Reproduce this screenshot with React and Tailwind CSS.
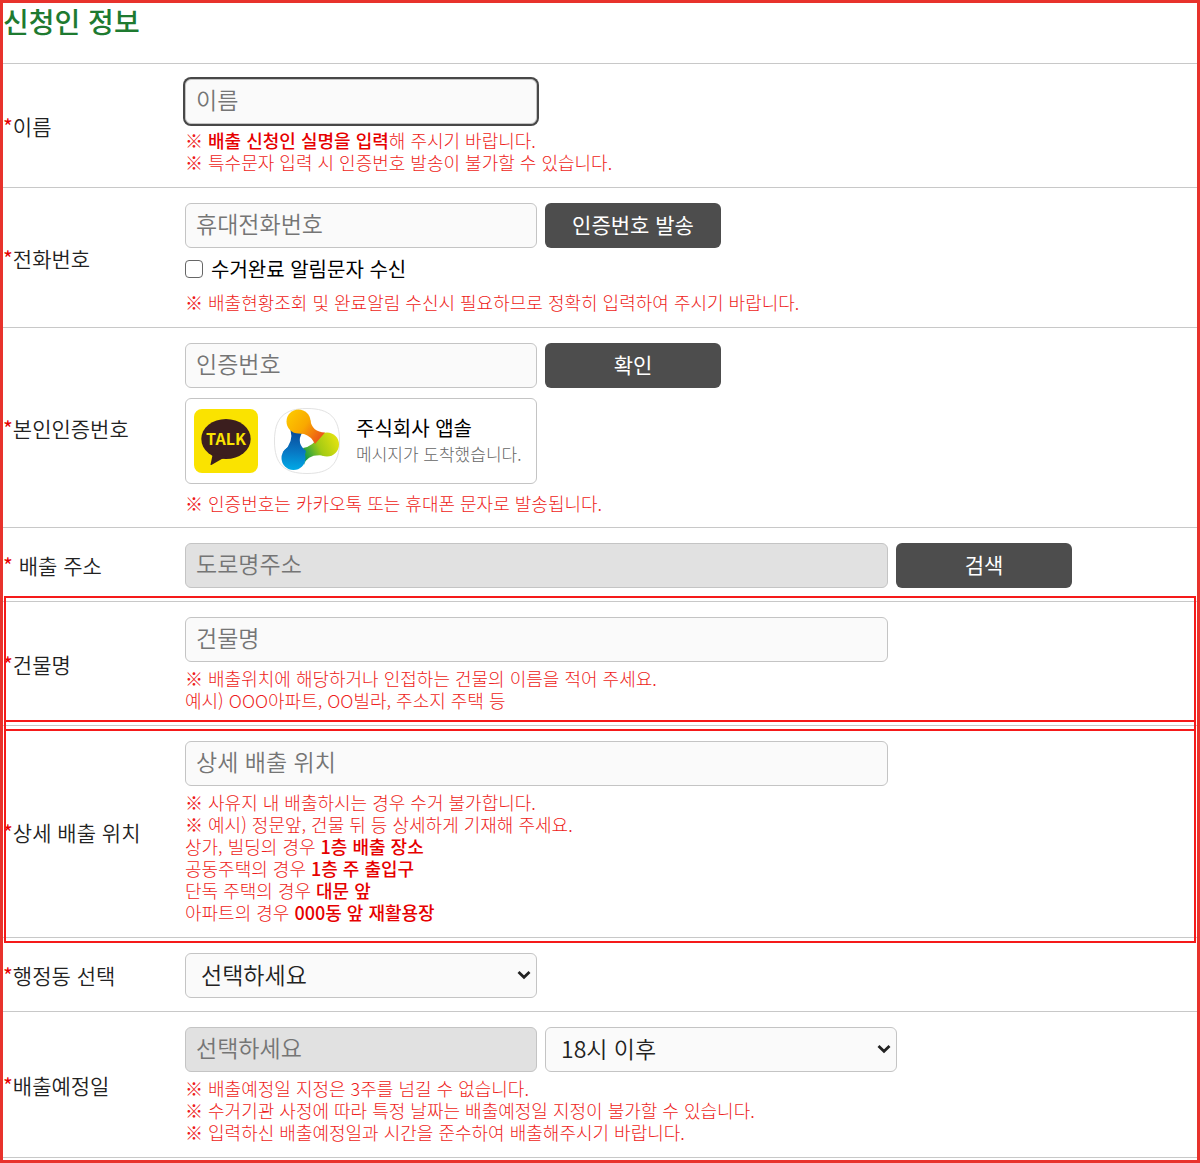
const INPUT =
  'h-[45px] w-full rounded-md border border-[#c4c4c4] px-2.5 pb-1.5 text-[23px] font-[350] leading-8 text-[#222] placeholder:text-[#757575] placeholder:opacity-100 focus:outline-none';
const SHORT = 'max-w-[352px]';
const LONG = 'max-w-[703px]';

function Row({ label, htmlFor, gap, framed, children }) {
  return (
    <div className="relative grid grid-cols-[182px_minmax(0,1fr)] items-center border-b border-[#c8c8c8] pt-[15px] pb-[13px]">
      <label htmlFor={htmlFor} className="pb-0.5 text-[21px] font-[350] leading-8 text-[#222]">
        <span className="font-normal text-[#e60000]">*</span>
        {gap ? ' ' : ''}
        {label}
      </label>
      <div>{children}</div>
      {framed && (
        <div className="pointer-events-none absolute inset-x-px -inset-y-1.5 border-2 border-[#f51a1a]" />
      )}
    </div>
  );
}

function Note({ children }) {
  return <p className="text-[18px] font-light leading-[22px] text-[#ee1c20]">{children}</p>;
}

function Strong({ children }) {
  return <b className="font-medium text-[#e60000]">{children}</b>;
}

function Notes({ children }) {
  return <div className="mt-[5px] mb-px">{children}</div>;
}

function ActionButton({ children }) {
  return (
    <button
      type="button"
      className="h-[45px] w-[176px] shrink-0 rounded-md bg-[#4d4d4d] pb-1 text-[21px] font-normal leading-8 text-white"
    >
      {children}
    </button>
  );
}

function Select({ id, label, option }) {
  return (
    <div className="relative w-full max-w-[352px]">
      <select
        id={id}
        aria-label={label}
        className="h-[45px] w-full appearance-none rounded-md border border-[#c4c4c4] bg-[#fafafa] pr-8 pb-1 pl-[15px] text-[23px] font-[350] leading-8 text-[#222]"
      >
        <option>{option}</option>
      </select>
      <svg
        viewBox="0 0 14 10"
        className="pointer-events-none absolute top-[17px] right-1.5 h-2.5 w-3.5"
        fill="none"
        stroke="#222"
        strokeWidth="2.8"
      >
        <path d="M1.5 2 7 7.2 12.5 2" />
      </svg>
    </div>
  );
}

function TalkIcon() {
  return (
    <svg viewBox="0 0 64 64" className="size-16 shrink-0" role="img" aria-label="TALK">
      <rect width="64" height="64" rx="8" fill="#fae300" />
      <ellipse cx="32" cy="30" rx="24.7" ry="20" fill="#3b1e1e" />
      <path d="M19 44 16.5 55.5Q16.6 56.5 17.8 55.8L33 47Z" fill="#3b1e1e" />
      <text
        x="32"
        y="36"
        textAnchor="middle"
        fill="#fae300"
        fontSize="16"
        fontWeight="700"
        fontFamily="'Noto Sans CJK KR', sans-serif"
      >
        TALK
      </text>
    </svg>
  );
}

function CompanyIcon() {
  return (
    <svg viewBox="0 0 66 66" className="size-[66px] shrink-0" aria-hidden="true">
      <defs>
        <linearGradient id="orange" x1="14" y1="10" x2="46" y2="34" gradientUnits="userSpaceOnUse">
          <stop offset="0" stopColor="#fcc400" />
          <stop offset=".45" stopColor="#f9a800" />
          <stop offset="1" stopColor="#ea4e1b" />
        </linearGradient>
        <linearGradient id="lime" x1="30" y1="48" x2="62" y2="32" gradientUnits="userSpaceOnUse">
          <stop offset="0" stopColor="#0f9a4a" />
          <stop offset=".5" stopColor="#a5cb14" />
          <stop offset="1" stopColor="#dde010" />
        </linearGradient>
        <linearGradient id="blue" x1="22" y1="26" x2="20" y2="62" gradientUnits="userSpaceOnUse">
          <stop offset="0" stopColor="#0a4f9e" />
          <stop offset=".5" stopColor="#0878c4" />
          <stop offset="1" stopColor="#00a9e6" />
        </linearGradient>
      </defs>
      <path
        d="M33 .5C56 .5 65.5 10 65.5 33S56 65.5 33 65.5 .5 56 .5 33 10 .5 33 .5Z"
        fill="#fff"
        stroke="#e2e2e2"
      />
      <path d="M30 57Q33 46 49 47.500L44 28Q40 38 29 40Q32 46 30 57Z" fill="url(#lime)" />
      <circle cx="53" cy="36.500" r="12" fill="url(#lime)" />
      <path d="M16.500 22Q20 34 9.500 43.500L30 55Q30 48 32 43Q22 35 28 25Z" fill="url(#blue)" />
      <circle cx="19.500" cy="50" r="12" fill="url(#blue)" />
      <path d="M17 22Q25 26 30 26Q37 28 41 36L51 24.600Q38 24 36.300 12Z" fill="url(#orange)" />
      <circle cx="24.500" cy="13.500" r="12" fill="url(#orange)" />
    </svg>
  );
}

export default function App() {
  return (
    <main
      lang="ko"
      className="border-[3px] border-[#e8322c] bg-white font-['Noto_Sans_CJK_KR',sans-serif] text-[#222]"
    >
      <form className="pb-0.5">
        <h1 className="border-b border-[#c8c8c8] pb-6 text-[28px] font-medium leading-9 text-[#1e7a30]">
          신청인 정보
        </h1>

        <Row label="이름" htmlFor="name">
          <input
            id="name"
            placeholder="이름"
            className={`${INPUT} ${SHORT} block bg-[#fafafa] ring-2 ring-[#484848]`}
          />
          <Notes>
            <Note>
              ※ <Strong>배출 신청인 실명을 입력</Strong>해 주시기 바랍니다.
            </Note>
            <Note>※ 특수문자 입력 시 인증번호 발송이 불가할 수 있습니다.</Note>
          </Notes>
        </Row>

        <Row label="전화번호" htmlFor="phone">
          <div className="flex gap-2">
            <input id="phone" type="tel" placeholder="휴대전화번호" className={`${INPUT} ${SHORT} bg-[#fafafa]`} />
            <ActionButton>인증번호 발송</ActionButton>
          </div>
          <label className="mt-[5px] mb-1.5 flex h-8 items-center gap-2 text-[20px] text-black">
            <input
              type="checkbox"
              className="size-[18px] appearance-none rounded-[4px] border border-[#666] bg-white checked:bg-[#4d4d4d]"
            />
            수거완료 알림문자 수신
          </label>
          <Notes>
            <Note>※ 배출현황조회 및 완료알림 수신시 필요하므로 정확히 입력하여 주시기 바랍니다.</Note>
          </Notes>
        </Row>

        <Row label="본인인증번호" htmlFor="code">
          <div className="flex gap-2">
            <input id="code" placeholder="인증번호" className={`${INPUT} ${SHORT} bg-[#fafafa]`} />
            <ActionButton>확인</ActionButton>
          </div>
          <div className="mt-2.5 mb-2 flex h-[86px] max-w-[352px] items-center gap-4 rounded-md border border-[#c4c4c4] bg-white px-2">
            <TalkIcon />
            <CompanyIcon />
            <div className="whitespace-nowrap pb-0.5">
              <p className="text-[20px] leading-7 text-black">주식회사 앱솔</p>
              <p className="text-[17px] font-light leading-6 text-[#666]">메시지가 도착했습니다.</p>
            </div>
          </div>
          <Note>※ 인증번호는 카카오톡 또는 휴대폰 문자로 발송됩니다.</Note>
        </Row>

        <Row label="배출 주소" htmlFor="address" gap>
          <div className="flex gap-2">
            <input id="address" readOnly placeholder="도로명주소" className={`${INPUT} ${LONG} bg-[#e1e1e1]`} />
            <ActionButton>검색</ActionButton>
          </div>
        </Row>

        <Row label="건물명" htmlFor="building" framed>
          <input id="building" placeholder="건물명" className={`${INPUT} ${LONG} block bg-[#fafafa]`} />
          <Notes>
            <Note>※ 배출위치에 해당하거나 인접하는 건물의 이름을 적어 주세요.</Note>
            <Note>예시) OOO아파트, OO빌라, 주소지 주택 등</Note>
          </Notes>
        </Row>

        <Row label="상세 배출 위치" htmlFor="detail" framed>
          <input id="detail" placeholder="상세 배출 위치" className={`${INPUT} ${LONG} block bg-[#fafafa]`} />
          <Notes>
            <Note>※ 사유지 내 배출하시는 경우 수거 불가합니다.</Note>
            <Note>※ 예시) 정문앞, 건물 뒤 등 상세하게 기재해 주세요.</Note>
            <Note>
              상가, 빌딩의 경우 <Strong>1층 배출 장소</Strong>
            </Note>
            <Note>
              공동주택의 경우 <Strong>1층 주 출입구</Strong>
            </Note>
            <Note>
              단독 주택의 경우 <Strong>대문 앞</Strong>
            </Note>
            <Note>
              아파트의 경우 <Strong>000동 앞 재활용장</Strong>
            </Note>
          </Notes>
        </Row>

        <Row label="행정동 선택" htmlFor="district">
          <Select id="district" option="선택하세요" />
        </Row>

        <Row label="배출예정일" htmlFor="date">
          <div className="flex gap-2">
            <input id="date" readOnly placeholder="선택하세요" className={`${INPUT} ${SHORT} bg-[#e1e1e1]`} />
            <Select id="time" label="배출 시간" option="18시 이후" />
          </div>
          <Notes>
            <Note>※ 배출예정일 지정은 3주를 넘길 수 없습니다.</Note>
            <Note>※ 수거기관 사정에 따라 특정 날짜는 배출예정일 지정이 불가할 수 있습니다.</Note>
            <Note>※ 입력하신 배출예정일과 시간을 준수하여 배출해주시기 바랍니다.</Note>
          </Notes>
        </Row>
      </form>
    </main>
  );
}
